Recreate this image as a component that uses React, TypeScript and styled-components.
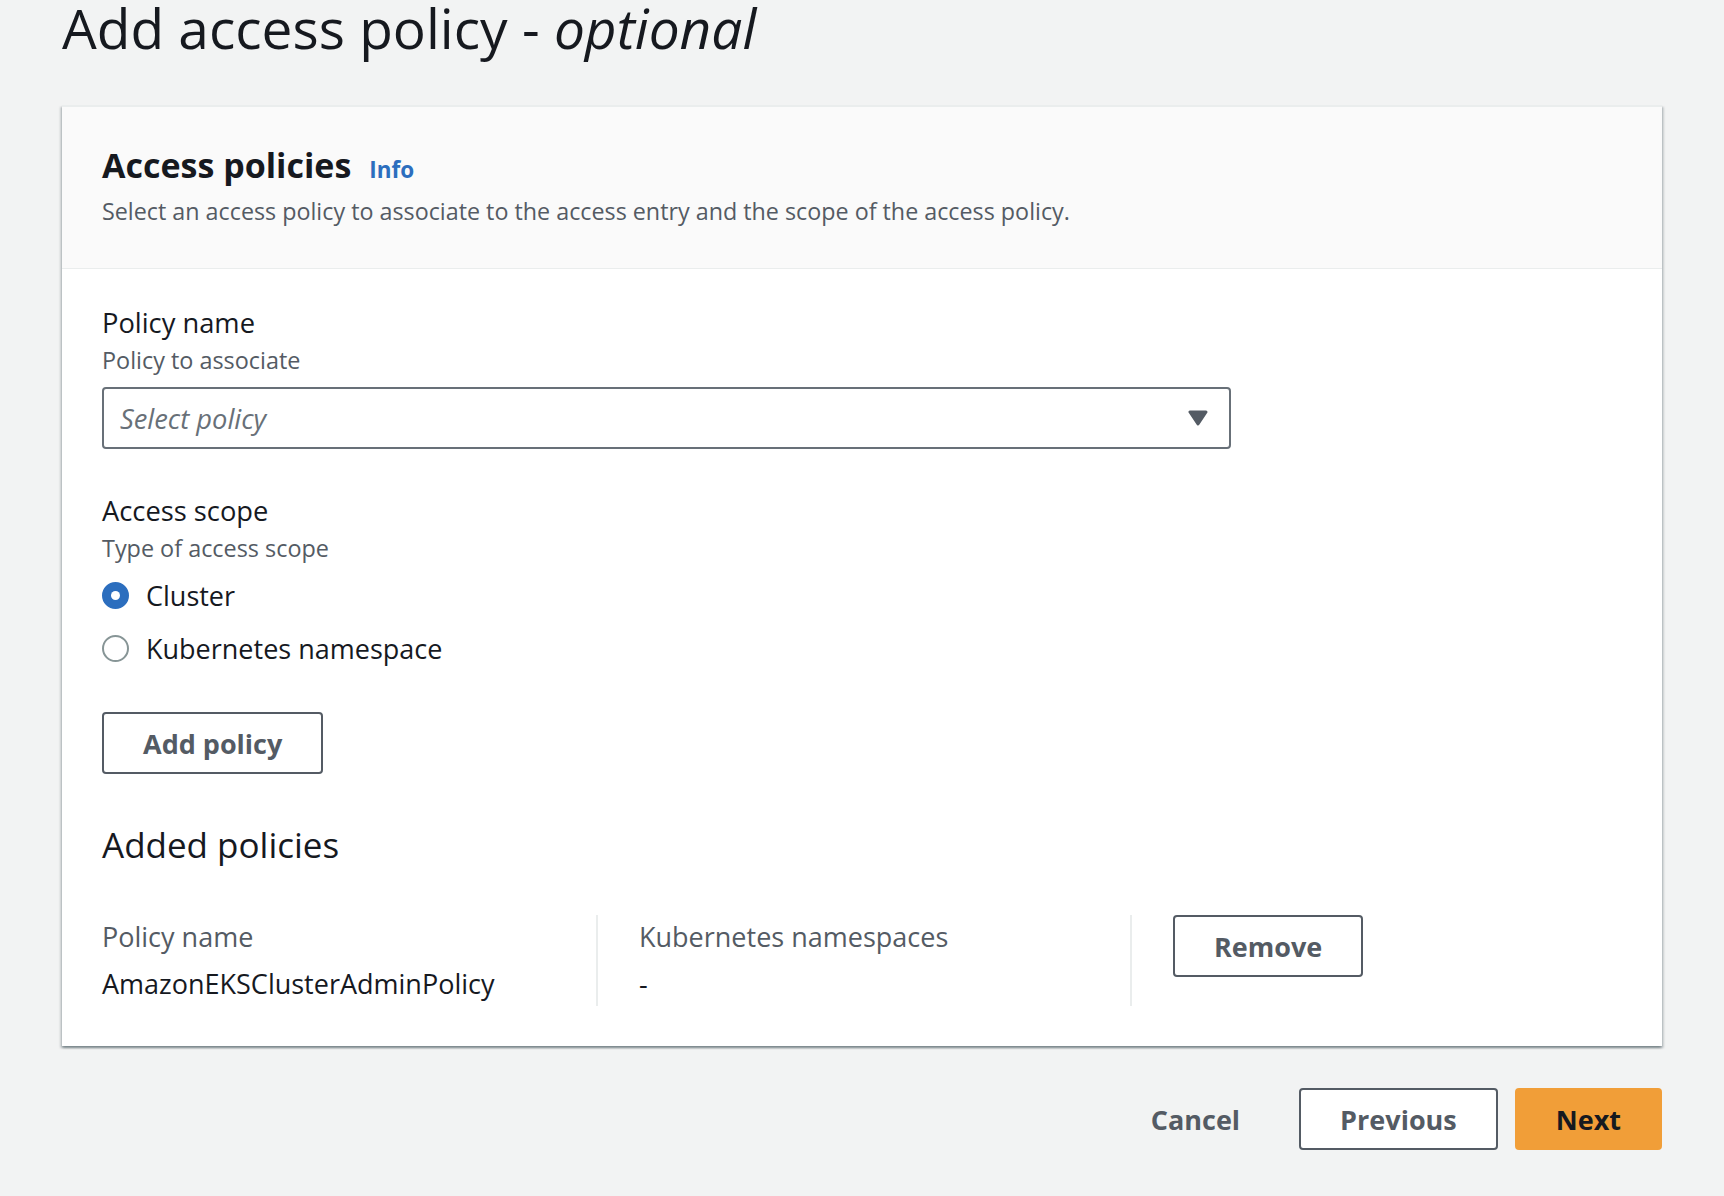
import React from "react";
import styled, { createGlobalStyle } from "styled-components";

const GlobalStyle = createGlobalStyle`
  html, body {
    margin: 0;
    padding: 0;
    background: #f2f3f3;
  }
  body {
    font-family: "Open Sans", "Noto Sans", sans-serif;
    color: #16191f;
  }
  * { box-sizing: border-box; }
`;

const Page = styled.div`
  width: 1724px;
  min-height: 1196px;
  padding: 0 62px;
  background: #f2f3f3;
`;

const Title = styled.h1`
  margin: 0;
  font-size: 55px;
  line-height: 56px;
  font-weight: 400;
  color: #16191f;
  white-space: nowrap;
  em { font-style: italic; }
`;

const Card = styled.section`
  margin-top: 49px;
  background: #ffffff;
  border-top: 2px solid #eaeded;
  box-shadow: 0 2px 2px 0 rgba(0, 28, 36, 0.3), 2px 2px 2px 0 rgba(0, 28, 36, 0.15),
    -2px 2px 2px 0 rgba(0, 28, 36, 0.15);
`;

const CardHeader = styled.header`
  background: #fafafa;
  border-bottom: 1px solid #eaeded;
  padding: 37px 40px 41px;
`;

const HeadingRow = styled.div`
  display: flex;
  align-items: baseline;
  gap: 18px;
`;

const Heading = styled.h2`
  margin: 0;
  font-size: 34px;
  line-height: 43px;
  font-weight: 700;
  color: #16191f;
`;

const InfoLink = styled.a`
  font-size: 22.5px;
  font-weight: 700;
  color: #2c6ebe;
  text-decoration: none;
`;

const HeaderDescription = styled.p`
  margin: 9px 0 0;
  font-size: 23.3px;
  line-height: 31px;
  color: #545b64;
`;

const CardBody = styled.div`
  padding: 34px 40px 40px;
`;

const Field = styled.div<{ $top?: number }>`
  margin-top: ${(p) => p.$top ?? 0}px;
`;

const Label = styled.div`
  font-size: 27.3px;
  line-height: 39px;
  color: #16191f;
`;

const FieldDescription = styled.div`
  margin-top: 3px;
  font-size: 23.4px;
  line-height: 31px;
  color: #545b64;
`;

const SelectTrigger = styled.div`
  margin-top: 11px;
  width: 1129px;
  height: 62px;
  border: 2px solid #687078;
  border-radius: 4px;
  background: #ffffff;
  display: flex;
  align-items: center;
  justify-content: space-between;
  padding: 0 21px 0 16px;
`;

const Placeholder = styled.span`
  font-size: 27.3px;
  line-height: 39px;
  font-style: italic;
  color: #687078;
`;

const RadioGroup = styled.div`
  margin-top: 12px;
  display: flex;
  flex-direction: column;
  gap: 14px;
`;

const RadioRow = styled.label`
  display: flex;
  align-items: center;
  gap: 17px;
  font-size: 27px;
  line-height: 39px;
  color: #16191f;
`;

const RadioCircle = styled.span<{ $checked?: boolean }>`
  width: 27px;
  height: 27px;
  border-radius: 50%;
  flex: none;
  display: flex;
  align-items: center;
  justify-content: center;
  background: ${(p) => (p.$checked ? "#2c6ebe" : "#ffffff")};
  border: 2px solid ${(p) => (p.$checked ? "#2c6ebe" : "#879596")};
  &::after {
    content: "";
    width: 9px;
    height: 9px;
    border-radius: 50%;
    background: #ffffff;
    display: ${(p) => (p.$checked ? "block" : "none")};
  }
`;

const Button = styled.button<{ $variant?: "normal" | "primary" | "link"; $top?: number }>`
  margin-top: ${(p) => p.$top ?? 0}px;
  height: 62px;
  padding: 0 ${(p) => (p.$variant === "link" ? 40 : 39)}px;
  font-family: "Open Sans", "Noto Sans", sans-serif;
  font-size: 27px;
  line-height: 39px;
  font-weight: 700;
  border-radius: 4px;
  cursor: pointer;
  flex: none;
  color: ${(p) => (p.$variant === "primary" ? "#16191f" : "#545b64")};
  background: ${(p) =>
    p.$variant === "primary" ? "#f19e38" : p.$variant === "link" ? "transparent" : "#ffffff"};
  border: 2px solid
    ${(p) =>
      p.$variant === "primary" ? "#f19e38" : p.$variant === "link" ? "transparent" : "#545b64"};
`;

const SubHeading = styled.h3`
  margin: 49px 0 0;
  font-size: 35px;
  line-height: 43px;
  font-weight: 400;
  color: #16191f;
`;

const PolicyGrid = styled.div`
  margin-top: 49px;
  display: grid;
  grid-template-columns: 494px 534px 1fr;
`;

const GridCell = styled.div<{ $divider?: boolean }>`
  min-height: 91px;
  padding-left: ${(p) => (p.$divider ? 41 : 0)}px;
  border-left: ${(p) => (p.$divider ? "2px solid #eaeded" : "none")};
`;

const CellLabel = styled.div`
  margin-top: 2px;
  font-size: 27px;
  line-height: 39px;
  color: #545b64;
`;

const CellValue = styled.div`
  margin-top: 8px;
  font-size: 27px;
  line-height: 39px;
  color: #16191f;
`;

const Footer = styled.div`
  margin-top: 42px;
  display: flex;
  justify-content: flex-end;
  align-items: center;
  gap: 17px;
`;

const Caret = () => (
  <svg width="20" height="16" viewBox="0 0 20 16">
    <polygon
      points="2,2 18,2 10,14"
      fill="#545b64"
      stroke="#545b64"
      strokeWidth="3"
      strokeLinejoin="round"
    />
  </svg>
);

export default function App() {
  return (
    <>
      <GlobalStyle />
      <Page>
        <Title>
          Add access policy - <em>optional</em>
        </Title>
        <Card>
          <CardHeader>
            <HeadingRow>
              <Heading>Access policies</Heading>
              <InfoLink href="#">Info</InfoLink>
            </HeadingRow>
            <HeaderDescription>
              Select an access policy to associate to the access entry and the scope of the access
              policy.
            </HeaderDescription>
          </CardHeader>
          <CardBody>
            <Field>
              <Label>Policy name</Label>
              <FieldDescription>Policy to associate</FieldDescription>
              <SelectTrigger>
                <Placeholder>Select policy</Placeholder>
                <Caret />
              </SelectTrigger>
            </Field>
            <Field $top={42}>
              <Label>Access scope</Label>
              <FieldDescription>Type of access scope</FieldDescription>
              <RadioGroup>
                <RadioRow>
                  <RadioCircle $checked />
                  Cluster
                </RadioRow>
                <RadioRow>
                  <RadioCircle />
                  Kubernetes namespace
                </RadioRow>
              </RadioGroup>
            </Field>
            <Button $top={44}>Add policy</Button>
            <SubHeading>Added policies</SubHeading>
            <PolicyGrid>
              <GridCell>
                <CellLabel>Policy name</CellLabel>
                <CellValue>AmazonEKSClusterAdminPolicy</CellValue>
              </GridCell>
              <GridCell $divider>
                <CellLabel>Kubernetes namespaces</CellLabel>
                <CellValue>-</CellValue>
              </GridCell>
              <GridCell $divider>
                <Button>Remove</Button>
              </GridCell>
            </PolicyGrid>
          </CardBody>
        </Card>
        <Footer>
          <Button $variant="link">Cancel</Button>
          <Button>Previous</Button>
          <Button $variant="primary">Next</Button>
        </Footer>
      </Page>
    </>
  );
}
